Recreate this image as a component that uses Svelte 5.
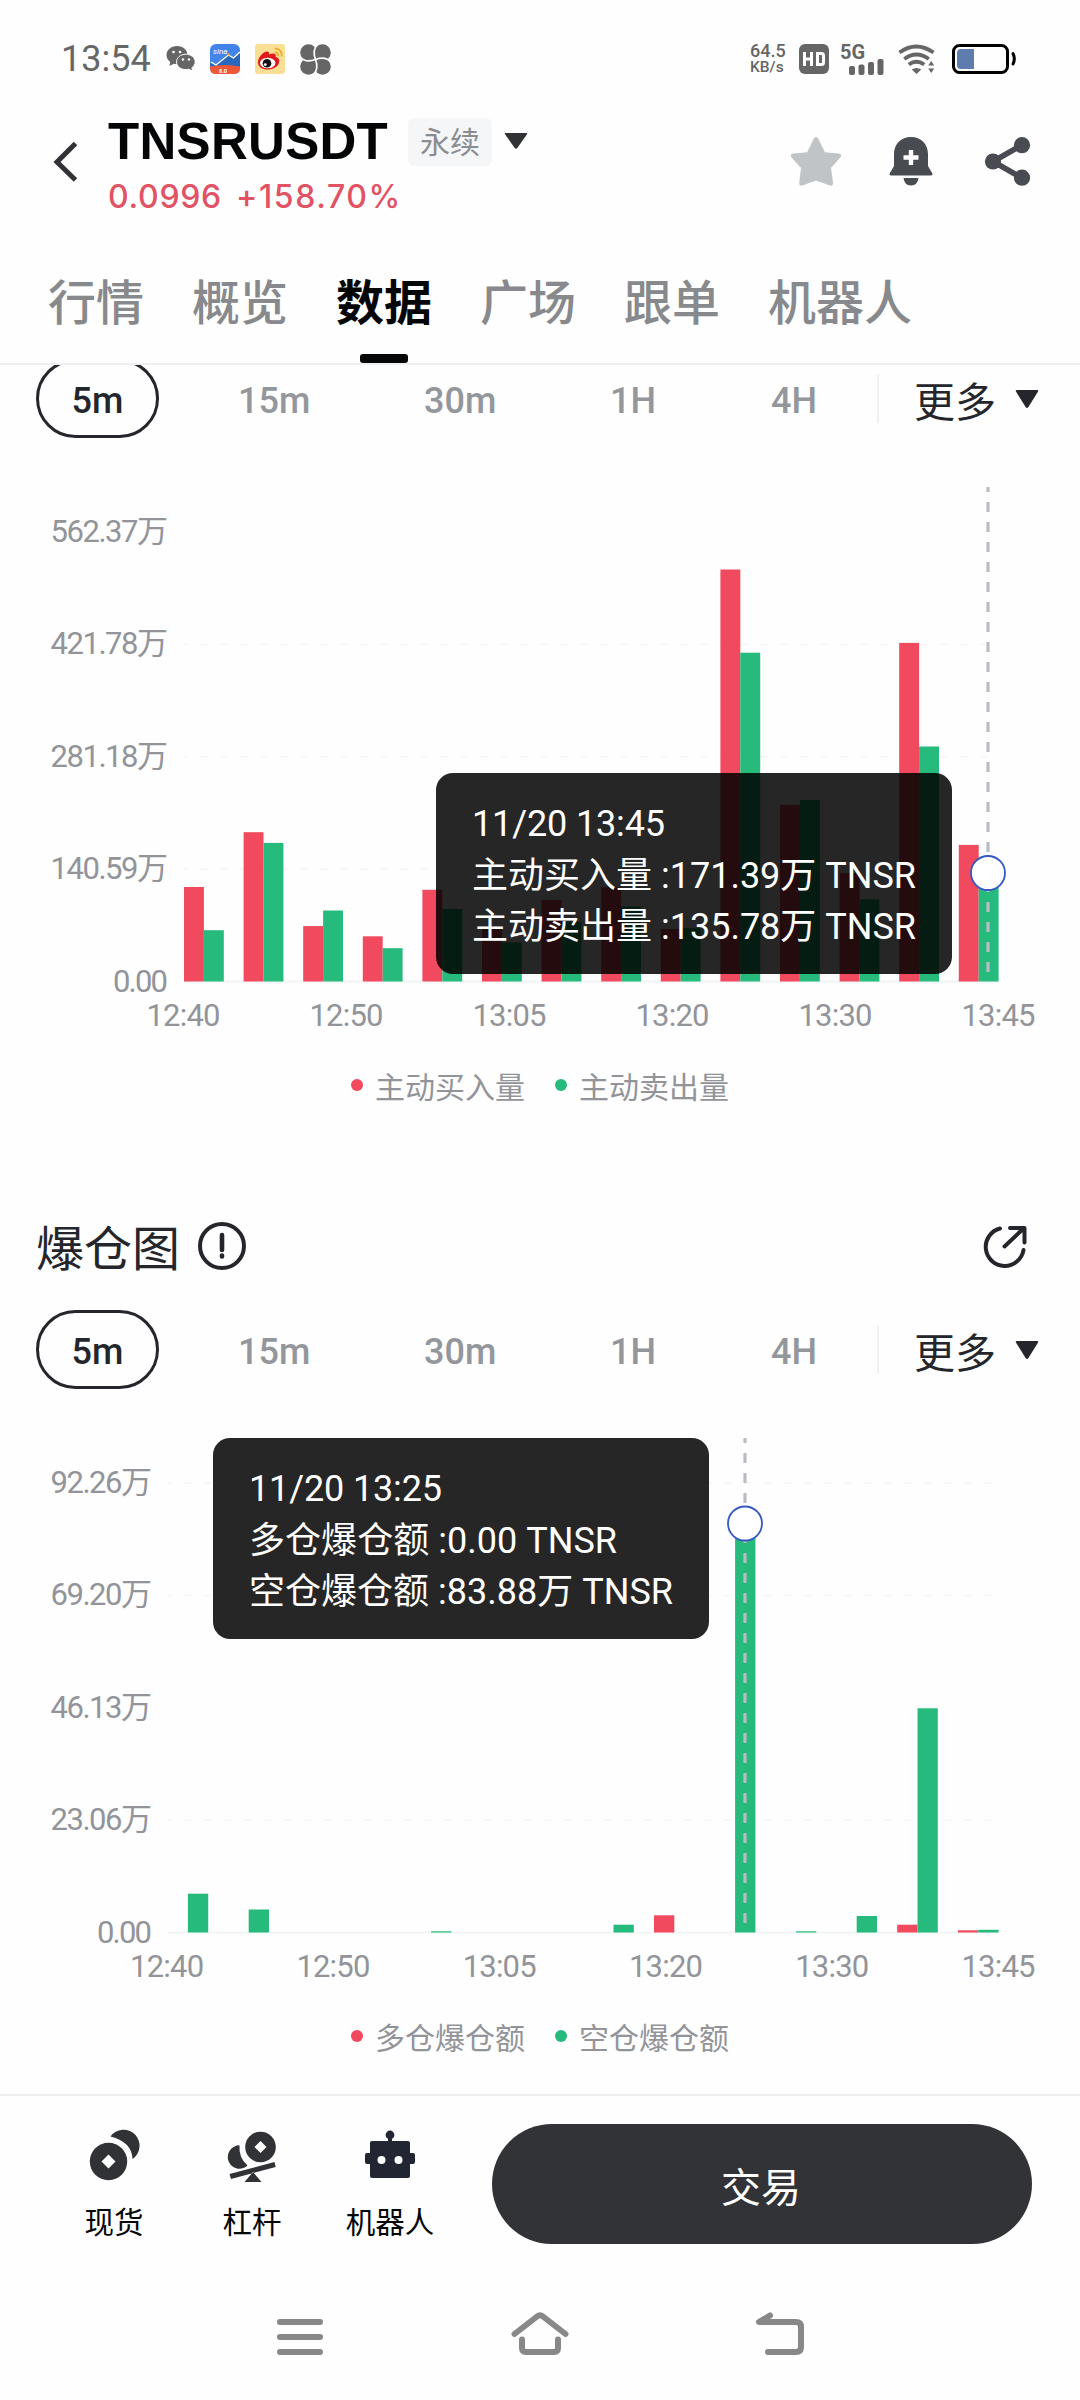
<script lang="ts">
  type Chart = {
    left: number;
    pitch: number;
    barWidth: number;
    yLabels: string[];
    yRight: number;
    xLabels: string[];
    gridRows: number[];
    sell: number[];
    buy: number[];
    cursor: { x: number; y: number };
    tip: { left: number; top: number; width: number; lines: { text: string; width: number }[] };
    legend: string[];
  };

  const tabs = ['行情', '概览', '数据', '广场', '跟单', '机器人'];
  const periods = ['5m', '15m', '30m', '1H', '4H'];
  const times = ['12:40', '12:50', '13:05', '13:20', '13:30', '13:45'];

  // Bar heights are in plot pixels, measured up from the zero line.
  const BASE = 497.5;
  const ROW = 112.4;

  const volume: Chart = {
    left: 184,
    pitch: 59.6,
    barWidth: 19.9,
    yLabels: ['562.37万', '421.78万', '281.18万', '140.59万', '0.00'],
    yRight: 168,
    xLabels: times,
    gridRows: [1, 2, 3],
    buy: [94.5, 149.3, 55.4, 45.2, 91.7, 52.5, 81.5, 94.2, 52.5, 412, 176.6, 108.5, 338.6, 136.6],
    sell: [51.3, 138.6, 71, 33.3, 72.5, 39, 59.5, 75, 53.3, 328.8, 181.5, 82.3, 235, 108],
    cursor: { x: 988, y: 389 },
    tip: {
      left: 436,
      top: 289,
      width: 516,
      lines: [
        { text: '11/20 13:45', width: 193 },
        { text: '主动买入量 :171.39万 TNSR', width: 444 },
        { text: '主动卖出量 :135.78万 TNSR', width: 444 }
      ]
    },
    legend: ['主动买入量', '主动卖出量']
  };

  const liquidation: Chart = {
    left: 167.6,
    pitch: 60.8,
    barWidth: 20.3,
    yLabels: ['92.26万', '69.20万', '46.13万', '23.06万', '0.00'],
    yRight: 152,
    xLabels: times,
    gridRows: [0, 1, 3],
    buy: [0, 0, 0, 0, 0, 0, 0, 0, 17.2, 0, 0, 0, 7.8, 2.2],
    sell: [38.8, 23, 0, 0, 1.2, 0, 0, 7.8, 0, 409, 1.2, 16.5, 224.2, 2.7],
    cursor: { x: 745, y: 88.5 },
    tip: {
      left: 213,
      top: 3,
      width: 496,
      lines: [
        { text: '11/20 13:25', width: 193 },
        { text: '多仓爆仓额 :0.00 TNSR', width: 368 },
        { text: '空仓爆仓额 :83.88万 TNSR', width: 424 }
      ]
    },
    legend: ['多仓爆仓额', '空仓爆仓额']
  };

  function labelWidth(text: string) {
    if (text === '0.00') return 55;
    return text.length === 7 ? 117.5 : 101.5;
  }
</script>

{#snippet periodRow()}
  <div class="periods">
    {#each periods as period, i}
      <span class="period p{i}" class:active={i === 0}>{period}</span>
    {/each}
    <span class="divider"></span>
    <span class="more">更多
      <svg width="24" height="20" viewBox="0 0 24 20"><path d="M2 1h20q2 0 .9 1.7L13.400 18q-1.400 2-2.800 0L1.100 2.700Q0 1 2 1z" fill="#24262c" /></svg>
    </span>
  </div>
{/snippet}

{#snippet chartView(c: Chart)}
  <div class="chart">
    <svg width="1080" height="560" viewBox="0 0 1080 560">
      {#each c.gridRows as row}
        <line x1={c.left} x2="998" y1={48 + row * ROW} y2={48 + row * ROW} stroke="#f4f5f6" stroke-width="1.500" stroke-dasharray="8 12" stroke-dashoffset="4" />
      {/each}
      <line x1={c.left} x2="998" y1="497.500" y2="497.500" stroke="#f2f3f4" stroke-width="2" />
      {#each c.buy as h, i}
        <rect x={c.left + i * c.pitch} y={BASE - h} width={c.barWidth} height={h} fill="#f1495d" />
      {/each}
      {#each c.sell as h, i}
        <rect x={c.left + i * c.pitch + c.barWidth} y={BASE - h} width={c.barWidth} height={h} fill="#26ba7c" />
      {/each}
      {#each c.yLabels as label, i}
        <text class="axis" x={c.yRight - labelWidth(label)} y={58 + i * ROW} textLength={labelWidth(label)}>{label}</text>
      {/each}
      {#each c.xLabels as label, i}
        <text class="axis" x={c.left - 37.5 + (i * (999 - c.left)) / 5} y="542" textLength="74">{label}</text>
      {/each}
      <line x1={c.cursor.x} x2={c.cursor.x} y1="3" y2="490" stroke="#b9bcc4" stroke-width="3.200" stroke-dasharray="10 10" stroke-dashoffset="5" />
      <circle cx={c.cursor.x} cy={c.cursor.y} r="17" fill="#fff" stroke="#3558c4" stroke-width="1.800" />
    </svg>
    <div class="tip" style:left="{c.tip.left}px" style:top="{c.tip.top}px" style:width="{c.tip.width}px">
      {#each c.tip.lines as line}
        <svg class="tipline" width={line.width} height="51.500"><text x="0" y="39" textLength={line.width}>{line.text}</text></svg>
      {/each}
    </div>
  </div>
  <div class="legend">
    <span><i class="dot red"></i>{c.legend[0]}</span>
    <span><i class="dot green"></i>{c.legend[1]}</span>
  </div>
{/snippet}

<div class="screen">
  <div class="status">
    <span class="time">13:54</span>
    <svg class="wechat" width="30" height="26" viewBox="0 0 30 26">
      <path d="M11 0C5 0 .5 4 .5 9c0 3 1.500 5.200 3.700 6.800L3.500 20l4.300-2.300c1 .3 2 .4 3.200.4C17 18 21.500 14 21.500 9S17 0 11 0z" fill="#666" />
      <path d="M19.800 8.200c-5.200 0-9.300 3.500-9.300 7.700 0 4.300 4.100 7.700 9.300 7.700 1 0 2-.1 2.900-.4l4 1.800-.8-3.300c2-1.400 3.300-3.500 3.300-5.800 0-4.200-4.200-7.700-9.400-7.700z" fill="#666" stroke="#fff" stroke-width="1" />
      <g fill="#fff"><circle cx="7.500" cy="6" r="1.300" /><circle cx="14" cy="6" r="1.300" /><circle cx="17" cy="13.500" r="1.200" /><circle cx="23" cy="13.500" r="1.200" /></g>
    </svg>
    <svg class="app" width="30" height="30" viewBox="0 0 30 30">
      <rect width="30" height="30" rx="6" fill="#4384ea" />
      <path d="M0 19l6 2 12-10 5 3 7-6v15H0z" fill="#2967bd" />
      <path d="M0 22.500q15-3 30 0V24q0 6-6 6H6q-6 0-6-6z" fill="#ee5838" />
      <path d="M1 18l5 3L18.500 11l5 3L30 8" fill="none" stroke="#fff" stroke-width="1.400" /><circle cx="18.700" cy="10.500" r="1.300" fill="#f4a22e" />
      <text x="3" y="10" font-size="8" font-style="italic" fill="#fff">sina</text><text x="9" y="28.500" font-size="5.500" font-weight="700" fill="#fff">8.0</text>
    </svg>
    <svg class="app" width="30" height="30" viewBox="0 0 30 30">
      <rect width="30" height="30" rx="3" fill="#fbdf94" />
      <path d="M3 18.500C3 14 7 8.500 11.500 7.500c2-.4 3 1 2.600 3 3-1.500 7.500-1.700 6.600 2.300 3 1 4 3 3.400 5.700C23 23 17.500 25.500 12.500 25.500S3 23 3 18.500z" fill="#e01a1e" />
      <ellipse cx="12.700" cy="19" rx="7.700" ry="5.300" fill="#fff" /><circle cx="12" cy="19.300" r="4.300" fill="#111" /><circle cx="10.300" cy="20.600" r="1.400" fill="#fff" />
      <path d="M19.500 4.700c4.500-.6 8 3 7 7.800M20 8.500c2.200-.2 3.500 1.300 3.100 3.600" fill="none" stroke="#e8ae2f" stroke-width="1.800" />
    </svg>
    <svg class="app" width="31" height="31" viewBox="0 0 31 31">
      <g fill="#666"><circle cx="8.500" cy="8.500" r="8.300" /><circle cx="22.500" cy="8.500" r="8.300" /><circle cx="8.500" cy="22.500" r="8.300" /><circle cx="22.500" cy="22.500" r="8.300" /><rect x="9" y="9" width="13" height="13" /></g>
      <path d="M17.500 .5Q12 6 15.500 15.500M30.500 17.500Q25 12 15.500 15.500M13.500 30.500Q19 25 15.500 15.500M.5 13.500Q6 19 15.500 15.500" stroke="#fff" stroke-width="1.700" fill="none" />
    </svg>
    <span class="grow"></span>
    <span class="speed"><b>64.5</b><em>KB/s</em></span>
    <svg class="hd" width="30" height="30" viewBox="0 0 30 30"><rect width="30" height="30" rx="6" fill="#666" /><path d="M5.500 8v14M12.500 8v14M5.500 15h7M17 9.500h5.500q2 0 2 2v7q0 2-2 2H18.500V9.500" fill="none" stroke="#fff" stroke-width="3" /></svg>
    <span class="cell">
      <span class="net">5G</span>
      <svg width="36" height="18" viewBox="0 0 36 18"><g fill="#666"><rect x="1" y="8" width="6" height="9" rx="2" /><rect x="10.500" y="6.500" width="6" height="10.500" rx="2" /><rect x="20" y="4" width="6" height="13" rx="2" /><rect x="29.500" y="1" width="6" height="16" rx="2" /></g></svg>
    </span>
    <svg class="wifi" width="38" height="30" viewBox="0 0 38 30">
      <g fill="none" stroke="#666" stroke-width="3.800"><path d="M1.500 8.500q16.500-12 34 0" /><path d="M6.300 15q12-9 24.500 0" /><path d="M10.800 20.500q7.500-5.500 15.500 0" /></g>
      <path d="M13.700 25.500q4.800-3 9.600 0L18.500 30z" fill="#666" /><path d="M30.200 21.500h6L33.200 17zM30.200 24.500h6L33.200 29z" fill="#666" />
    </svg>
    <svg class="battery" width="66" height="30" viewBox="0 0 66 30">
      <rect x="1.500" y="1.500" width="54" height="27" rx="6" fill="none" stroke="#000" stroke-width="3" /><path d="M9 5h13v20H9q-4 0-4-4V9q0-4 4-4z" fill="#5f7cae" /><path d="M61 9.500q2.600 5.500 0 10.500" fill="none" stroke="#000" stroke-width="3" stroke-linecap="round" />
    </svg>
  </div>

  <div class="head">
    <svg class="back" width="26" height="42" viewBox="0 0 26 42"><path d="M22.500 3.500L4 22l18.500 18" fill="none" stroke="#303236" stroke-width="5" stroke-linejoin="miter" /></svg>
    <div class="pair">
      <div class="name"><b>TNSRUSDT</b><span class="tag">永续</span><svg width="24" height="16" viewBox="0 0 24 16"><path d="M1.500 0h21q1.500 0 .5 1.200L13.300 15q-1.300 1.500-2.600 0L1 1.200Q0 0 1.500 0z" fill="#303236" /></svg></div>
      <div class="price"><span>0.0996</span><span class="change">+158.70%</span></div>
    </div>
    <span class="grow"></span>
    <svg class="star" width="50" height="49" viewBox="0 0 50 49"><path d="M22.600 2q2.400-4 4.800 0l6.500 13.200 14 1.400q4 1 1.200 4.200L40 31l2 14.500q0 4.300-4 2.800L25 43.500l-12.800 4.800q-4 1.500-4-2.800L10 31 .8 20.800q-2.600-3.200 1.200-4.200l14.200-1.400z" fill="#c0c4c7" /></svg>
    <svg class="bell" width="44" height="49" viewBox="0 0 44 49"><path d="M22 0C12 0 5 7.200 5 17v12L.600 36.500Q0 38.500 2 38.500h40q2 0 1.400-2L39 29V17C39 7.200 32 0 22 0z" fill="#484b52" /><path d="M14.500 41h15q-1 7.500-7.500 7.500T14.500 41z" fill="#484b52" /><path d="M22 13v15M14.500 20.500h15" stroke="#fff" stroke-width="4.400" /></svg>
    <svg class="share" width="48" height="49" viewBox="0 0 48 49"><path d="M38 8L9 24.500 38 41" fill="none" stroke="#484b52" stroke-width="5.600" /><g fill="#484b52"><circle cx="38" cy="8.200" r="8.100" /><circle cx="9" cy="24.500" r="8.100" /><circle cx="38" cy="40.700" r="8.100" /></g></svg>
  </div>

  <div class="tabs">
    {#each tabs as tab, i}
      <span class:on={i === 2}>{tab}</span>
    {/each}
  </div>

  <div class="content">
    <section class="first">
      {@render periodRow()}
      {@render chartView(volume)}
    </section>
    <section class="second">
      <div class="title">
        <span>爆仓图</span>
        <svg width="50" height="50" viewBox="0 0 50 50"><circle cx="25" cy="25" r="22" fill="none" stroke="#24262c" stroke-width="4" /><path d="M25 14v15M25 34.500v1" stroke="#24262c" stroke-width="4.600" stroke-linecap="round" /></svg>
        <span class="grow"></span>
        <svg class="export" width="46" height="46" viewBox="0 0 46 46"><path d="M18 4.500A19 19 0 1 0 41.500 26M22.500 22.500L41 5M28 4h14.500v14.500" fill="none" stroke="#24262c" stroke-width="4" stroke-linecap="round" stroke-linejoin="round" /></svg>
      </div>
      {@render periodRow()}
      {@render chartView(liquidation)}
    </section>
  </div>

  <div class="bottom">
    <div class="entry spot">
      <svg width="50" height="52" viewBox="0 0 50 52"><path d="M21.500 6.500A16 16 0 1 1 43.500 29Q43 12 21.500 6.500z" fill="#303236" /><circle cx="19.500" cy="31.500" r="18.700" fill="#303236" /><path d="M19.500 24.500l7 7-7 7-7-7z" fill="#fff" /></svg>
      <span>现货</span>
    </div>
    <div class="entry lever">
      <svg width="50" height="52" viewBox="0 0 50 52"><path d="M12.500 15.300A11.700 11.700 0 1 0 20.500 35.500Q11.500 28 12.500 15.300z" fill="#303236" /><circle cx="33.500" cy="17" r="15.300" fill="#303236" /><path d="M33.500 11l6 6-6 6-6-6z" fill="#fff" /><path d="M2.500 44l1.500 5L48.700 37l-1.200-5zM26 42l8.500 10h-17z" fill="#303236" /></svg>
      <span>杠杆</span>
    </div>
    <div class="entry robot">
      <svg width="50" height="52" viewBox="0 0 50 52"><circle cx="25" cy="5" r="4.400" fill="#222632" /><path d="M25 5v9" stroke="#222632" stroke-width="4" /><rect x="5" y="11" width="40" height="37" rx="2" fill="#222632" /><rect y="23" width="50" height="11" rx="2" fill="#222632" /><circle cx="16.500" cy="30" r="4" fill="#fff" /><circle cx="33.500" cy="30" r="4" fill="#fff" /></svg>
      <span>机器人</span>
    </div>
    <button>交易</button>
  </div>

  <div class="nav">
    <svg width="60" height="50" viewBox="0 0 60 50"><path d="M10 17h40M10 32h40M10 47h40" /></svg>
    <svg width="60" height="50" viewBox="0 0 60 50"><path d="M4.500 29L27 11.500q3-2.500 6 0L55.500 29M12 34.500V43q0 4 4 4h28q4 0 4-4v-8.500" /></svg>
    <svg width="60" height="50" viewBox="0 0 60 50"><path d="M20 10.500L9 17h37q5 0 5 5v20q0 5-5 5H18" /></svg>
  </div>
</div>

<style>
  :global(body) { margin: 0; background: #fefefe; }
  .screen { width: 1080px; height: 2400px; overflow: hidden; display: flex; flex-direction: column; background: #fefefe; font-family: Roboto, 'Noto Sans CJK SC', sans-serif; color: #24262c; }
  .screen > div { flex: none; }
  svg { display: block; flex: none; overflow: visible; }
  .grow { flex: 1; }

  .status { height: 78px; padding: 20px 62px 0 61px; display: flex; align-items: center; color: #666; }
  .time { font-size: 36px; width: 105px; }
  .wechat { margin-right: 14px; }
  .app { margin-right: 15px; }
  .speed { display: flex; flex-direction: column; width: 49px; line-height: 16px; }
  .speed b { font-weight: 500; font-size: 18px; }
  .speed em { font-style: normal; font-weight: 500; font-size: 15.5px; }
  .hd { margin-right: 11px; }
  .cell { width: 46px; margin-right: 12px; display: flex; flex-direction: column; align-items: flex-start; }
  .cell svg { margin: -5px 0 0 8px; }
  .net { font-size: 20px; line-height: 18px; margin-bottom: 2px; font-weight: 700; }
  .wifi { margin-right: 16px; }

  .head { height: 130px; display: flex; padding: 0 48px 0 53px; align-items: flex-start; }
  .back { margin-top: 42px; }
  .pair { margin-left: 29px; }
  .name { display: flex; align-items: center; height: 60px; margin-top: 14px; color: #040506; }
  .name b { font: 700 51px/60px 'Liberation Sans', sans-serif; width: 300px; letter-spacing: .3px; }
  .tag { width: 84px; height: 48px; border-radius: 6px; background: #f4f6f8; color: #8a8c90; font-size: 30px; line-height: 49px; text-align: center; margin-right: 12px; }
  .name svg { margin-top: -2px; }
  .price { font: 500 32px/40px Inter, sans-serif; color: #e05264; display: flex; height: 40px; margin-top: 5px; letter-spacing: .7px; }
  .price span { width: 128px; }
  .price .change { width: 175px; letter-spacing: 1.6px; }
  .star { margin: 39px 48px 0 0; }
  .bell { margin: 39px 51px 0 0; }
  .share { margin-top: 39px; }

  .tabs { height: 135px; border-bottom: 2px solid #eeeff0; display: flex; padding-left: 48px; gap: 48px; font-size: 48px; font-weight: 500; color: #87898c; }
  .tabs span { height: 135px; line-height: 151px; display: flex; flex-direction: column; align-items: center; }
  .tabs .on { color: #050607; font-weight: 700; }
  .tabs .on::after { content: ''; width: 48px; height: 9px; border-radius: 3px; background: #050607; margin-top: -25px; flex: none; }

  .content { height: 1729px; overflow: hidden; }
  .first { margin-top: -6px; height: 831px; }
  .periods { height: 79px; display: flex; align-items: center; font-size: 36px; font-weight: 500; color: #93969b; padding-left: 36px; }
  .period { box-sizing: border-box; height: 79px; line-height: 85px; flex: none; }
  .p0 { width: 123px; border: 3px solid #24262c; border-radius: 40px; line-height: 79px; text-align: center; color: #24262c; }
  .p1 { margin-left: 79px; width: 186px; }
  .p2 { width: 186px; }
  .p3 { width: 161px; }
  .p4 { width: 106px; }
  .divider { width: 2px; height: 48px; background: #eff0f2; }
  .more { margin-left: 35px; color: #24262c; font-size: 41px; font-weight: 400; display: flex; align-items: center; gap: 19px; height: 79px; }

  .chart { position: relative; height: 560px; margin-top: 46px; }
  .axis { font-size: 31px; fill: #929499; }
  .tip { position: absolute; height: 201px; box-sizing: border-box; padding: 24px 0 0 36px; border-radius: 17px; background: rgba(0, 0, 0, .85); }
  .tipline text { font-size: 36px; fill: #fff; }
  .legend { height: 60px; margin-top: 14px; display: flex; padding-left: 351px; gap: 30px; font-size: 30px; line-height: 60px; color: #929499; }
  .legend span { display: flex; align-items: center; }
  .dot { width: 12px; height: 12px; border-radius: 50%; margin: -7px 12px 0 0; }
  .red { background: #f1495d; }
  .green { background: #26ba7c; }

  .title { height: 120px; display: flex; align-items: flex-start; padding: 31px 52px 0 36px; box-sizing: border-box; font-size: 48px; line-height: 57px; }
  .title span:first-child { margin-right: 17px; }
  .export { margin-top: 3px; }

  .bottom { height: 150px; border-top: 2px solid #efefef; display: flex; padding: 28px 48px 0 0; align-items: flex-start; }
  .entry { display: flex; flex-direction: column; align-items: center; font-size: 29.5px; line-height: 44px; color: #050607; gap: 19px; padding-top: 6px; flex: none; }
  .spot { width: 70px; margin-left: 79px; }
  .lever { width: 70px; margin-left: 68px; }
  .robot { width: 100px; margin-left: 53px; }
  button { margin: 0 0 0 auto; width: 540px; height: 120px; border: 0; border-radius: 60px; background: #323337; color: #fff; font: 400 40px 'Noto Sans CJK SC', sans-serif; padding: 1px 2px 0 0; }

  .nav { height: 95px; margin-top: 31px; display: flex; justify-content: center; gap: 180px; }
  .nav path { fill: none; stroke: #888; stroke-width: 6; stroke-linecap: round; stroke-linejoin: round; }
</style>
